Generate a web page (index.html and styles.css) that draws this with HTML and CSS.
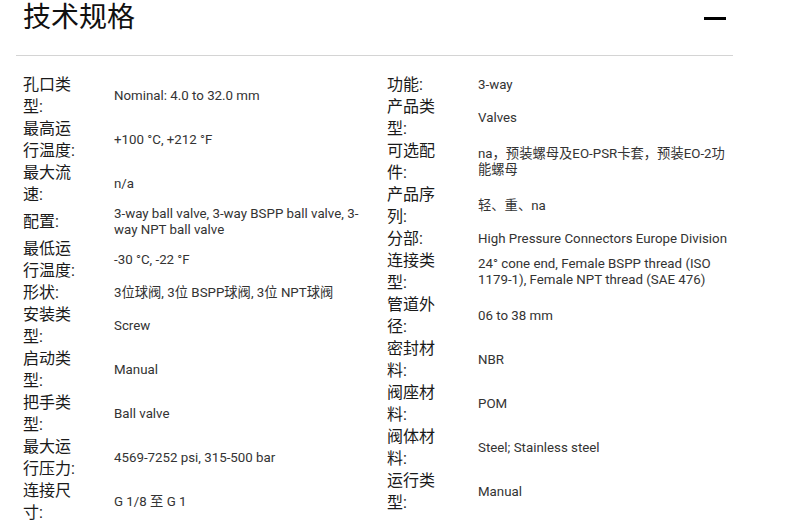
FILE: index.html
```html
<!DOCTYPE html>
<html lang="zh">
<head>
    <meta charset="UTF-8">
    <meta name="viewport" content="width=device-width, initial-scale=1.0">
    <title>技术规格</title>
    <link rel="stylesheet" href="styles.css">
</head>
<body>
    <section class="panel">
        <header class="panel-header">
            <h2>技术规格</h2>
            <button class="toggle" aria-label="收起"></button>
        </header>
        <div class="specs">
            <dl class="spec-col">
                <div class="spec-row"><dt>孔口类型:</dt><dd>Nominal: 4.0 to 32.0 mm</dd></div>
                <div class="spec-row"><dt>最高运行温度:</dt><dd>+100 °C, +212 °F</dd></div>
                <div class="spec-row"><dt>最大流速:</dt><dd>n/a</dd></div>
                <div class="spec-row"><dt>配置:</dt><dd>3-way ball valve, 3-way BSPP ball valve, 3-way NPT ball valve</dd></div>
                <div class="spec-row"><dt>最低运行温度:</dt><dd>-30 °C, -22 °F</dd></div>
                <div class="spec-row"><dt>形状:</dt><dd>3位球阀, 3位 BSPP球阀, 3位 NPT球阀</dd></div>
                <div class="spec-row"><dt>安装类型:</dt><dd>Screw</dd></div>
                <div class="spec-row"><dt>启动类型:</dt><dd>Manual</dd></div>
                <div class="spec-row"><dt>把手类型:</dt><dd>Ball valve</dd></div>
                <div class="spec-row"><dt>最大运行压力:</dt><dd>4569-7252 psi, 315-500 bar</dd></div>
                <div class="spec-row"><dt>连接尺寸:</dt><dd>G 1/8 至 G 1</dd></div>
            </dl>
            <dl class="spec-col">
                <div class="spec-row"><dt>功能:</dt><dd>3-way</dd></div>
                <div class="spec-row"><dt>产品类型:</dt><dd>Valves</dd></div>
                <div class="spec-row"><dt>可选配件:</dt><dd>na，预装螺母及EO-PSR卡套，预装EO-2功能螺母</dd></div>
                <div class="spec-row"><dt>产品序列:</dt><dd>轻、重、na</dd></div>
                <div class="spec-row"><dt>分部:</dt><dd>High Pressure Connectors Europe Division</dd></div>
                <div class="spec-row"><dt>连接类型:</dt><dd>24° cone end, Female BSPP thread (ISO 1179-1), Female NPT thread (SAE 476)</dd></div>
                <div class="spec-row"><dt>管道外径:</dt><dd>06 to 38 mm</dd></div>
                <div class="spec-row"><dt>密封材料:</dt><dd>NBR</dd></div>
                <div class="spec-row"><dt>阀座材料:</dt><dd>POM</dd></div>
                <div class="spec-row"><dt>阀体材料:</dt><dd>Steel; Stainless steel</dd></div>
                <div class="spec-row"><dt>运行类型:</dt><dd>Manual</dd></div>
            </dl>
        </div>
    </section>
</body>
</html>
```

FILE: styles.css
```css
body {
    margin: 0;
    background-color: #fff;
    font-family: Roboto, "Noto Sans CJK SC", sans-serif;
    color: #222;
}
.panel {
    margin-left: 16px;
    width: 717px;
}
.panel-header {
    display: flex;
    justify-content: space-between;
    align-items: flex-start;
    height: 55px;
    padding: 0 7px;
    border-bottom: 1px solid #d4d4d4;
    box-sizing: content-box;
}
.panel-header h2 {
    margin: 0;
    font-family: "Noto Sans CJK SC", sans-serif;
    font-weight: 400;
    font-size: 28px;
    line-height: 31px;
    color: #111;
}
.toggle {
    width: 22px;
    height: 3px;
    margin-top: 17px;
    padding: 0;
    border: none;
    background-color: #000;
    cursor: pointer;
}
.specs {
    display: grid;
    grid-template-columns: 339px 1fr;
    column-gap: 25px;
    padding: 18px 0 0 7px;
}
.spec-col {
    margin: 0;
}
.spec-row {
    display: grid;
    grid-template-columns: 58px 1fr;
    column-gap: 33px;
    align-items: center;
}
.spec-row dt {
    font-size: 16px;
    line-height: 22px;
    color: #1a1a1a;
}
.spec-row dd {
    margin: 0;
    font-size: 13.3px;
    line-height: 16px;
    color: #333;
}
```
